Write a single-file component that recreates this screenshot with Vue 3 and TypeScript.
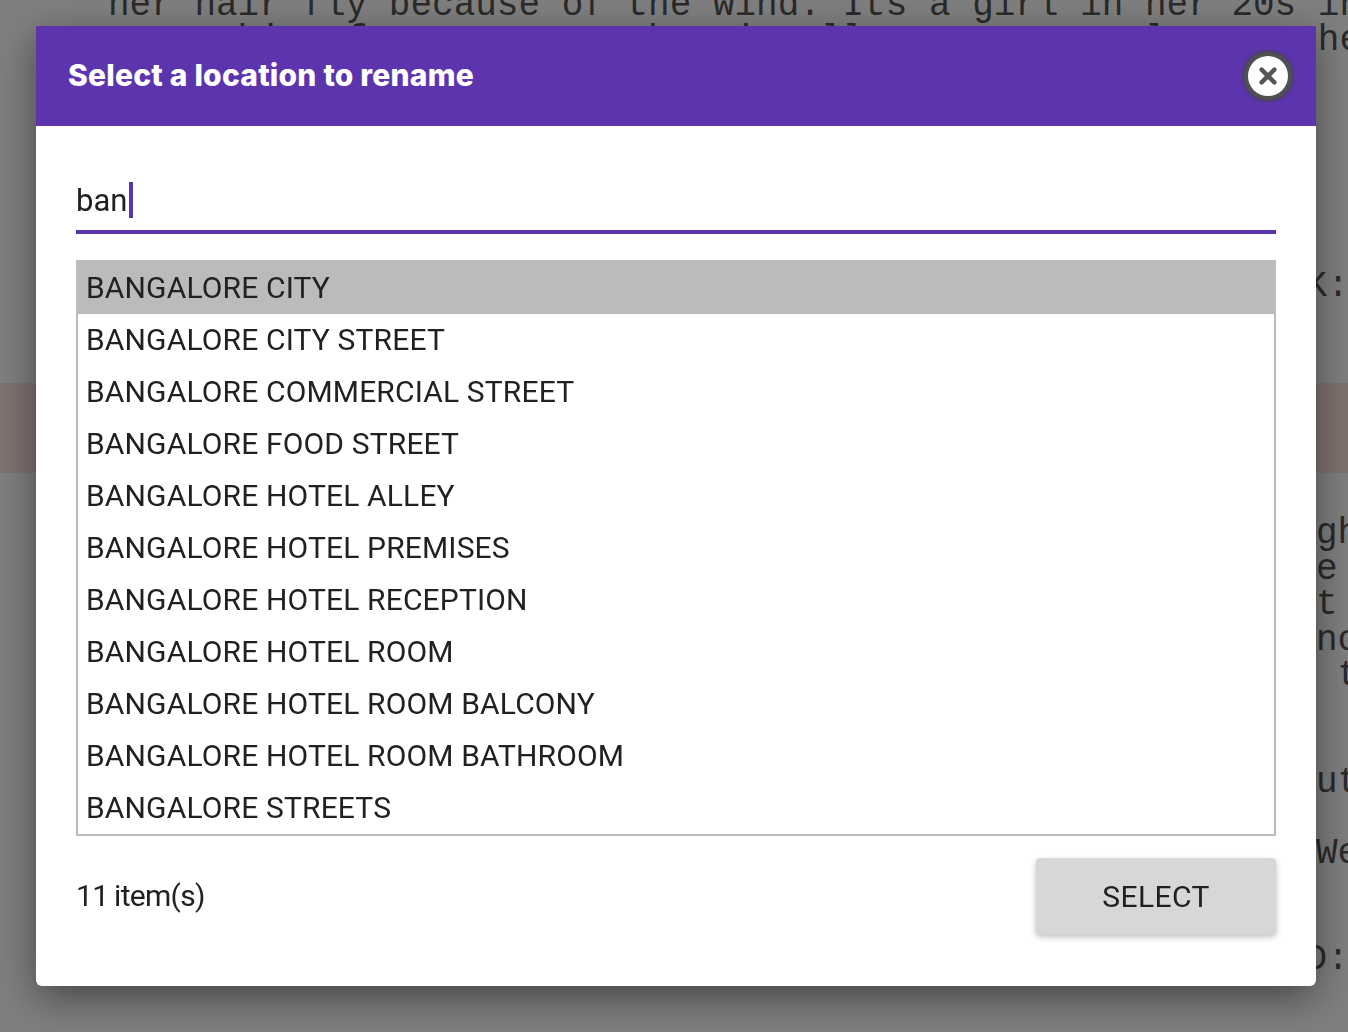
<template>
  <div class="page">
    <div class="script">
      <div v-for="(l, i) in sceneTop" :key="i" class="line" :style="{ paddingLeft: l.x + 'px' }">{{ l.text }}</div>
      <div class="scene-gap"></div>
      <div class="line" :style="{ paddingLeft: charX + 'px' }">K:</div>
      <div class="band"></div>
      <div class="scene-lower">
        <div v-for="(l, i) in sceneLower" :key="i" class="line" :style="{ paddingLeft: l.x + 'px' }">{{ l.text }}</div>
      </div>
    </div>

    <div class="overlay">
      <div class="dialog">
        <header class="dialog-head">
          <h1 class="dialog-title">Select a location to rename</h1>
          <button class="close-btn" aria-label="Close">
            <svg width="18" height="18" viewBox="0 0 18 18">
              <path d="M2.6 2.6 L15.4 15.4 M15.4 2.6 L2.6 15.4" stroke="#555" stroke-width="4.4" stroke-linecap="round" fill="none" />
            </svg>
          </button>
        </header>

        <div class="dialog-body">
          <div class="search">
            <span class="search-text">{{ query }}</span><span class="caret"></span>
          </div>

          <ul class="list">
            <li
              v-for="(loc, i) in locations"
              :key="loc"
              class="list-item"
              :class="{ selected: i === selectedIndex }"
            >
              {{ loc }}
            </li>
          </ul>

          <div class="dialog-foot">
            <span class="count">{{ locations.length }} item(s)</span>
            <button class="select-btn">SELECT</button>
          </div>
        </div>
      </div>
    </div>
  </div>
</template>

<script setup lang="ts">
import { ref } from 'vue'

const query = ref('ban')
const selectedIndex = ref(0)

const locations = [
  'BANGALORE CITY',
  'BANGALORE CITY STREET',
  'BANGALORE COMMERCIAL STREET',
  'BANGALORE FOOD STREET',
  'BANGALORE HOTEL ALLEY',
  'BANGALORE HOTEL PREMISES',
  'BANGALORE HOTEL RECEPTION',
  'BANGALORE HOTEL ROOM',
  'BANGALORE HOTEL ROOM BALCONY',
  'BANGALORE HOTEL ROOM BATHROOM',
  'BANGALORE STREETS'
]

// screenplay behind the dialog, only the edges of it show
const bodyX = 108
const edgeX = 1316
const charX = 1305.6

const sceneTop = [
  { text: 'her hair fly because of the wind. Its a girl in her 20s in', x: bodyX },
  { text: 'waves his of as car roar by air all over some mole on a her', x: bodyX }
]

const sceneLower = [
  { text: 'gh', x: edgeX },
  { text: 'e', x: edgeX },
  { text: 't', x: edgeX },
  { text: 'no', x: edgeX },
  { text: ' t', x: edgeX },
  { text: '\u00a0', x: edgeX },
  { text: '\u00a0', x: edgeX },
  { text: 'ut', x: edgeX },
  { text: '\u00a0', x: edgeX },
  { text: 'We', x: edgeX },
  { text: '\u00a0', x: edgeX },
  { text: '\u00a0', x: edgeX },
  { text: 'D:', x: charX }
]
</script>

<style>
html,
body {
  margin: 0;
  background: #fff;
}
</style>

<style scoped>
.page {
  height: 1032px;
  overflow: hidden;
}

.script {
  margin-top: -12px;
  font-family: "Liberation Mono", monospace;
  font-size: 36px;
  line-height: 35px;
  color: #555;
}

.line {
  height: 35px;
  white-space: pre;
}

.scene-gap {
  height: 211px;
}

.band {
  height: 90px;
  margin-top: 79px;
  background: #ffe6e0;
}

.scene-lower {
  margin-top: 43px;
}

.scene-lower .line {
  height: 35.5px;
  line-height: 35.5px;
}

.overlay {
  position: fixed;
  inset: 0;
  background: rgba(0, 0, 0, 0.5);
  display: flex;
  justify-content: center;
  align-items: flex-start;
  padding: 26px 0 0 4px;
}

.dialog {
  width: 1280px;
  height: 960px;
  background: #fff;
  border-radius: 0 0 6px 6px;
  box-shadow: 0 12px 40px rgba(0, 0, 0, 0.45);
  font-family: Roboto, "Open Sans", sans-serif;
  color: #212121;
}

.dialog-head {
  height: 100px;
  box-sizing: border-box;
  padding: 0 28px 0 32px;
  background: #5c35ae;
  display: flex;
  align-items: center;
  justify-content: space-between;
}

.dialog-title {
  margin: 0 0 2px;
  font-family: Inter, Roboto, sans-serif;
  font-size: 30px;
  font-weight: 800;
  letter-spacing: 0.22px;
  color: #fff;
}

.close-btn {
  width: 40px;
  height: 40px;
  padding: 0;
  border: none;
  border-radius: 50%;
  background: #fff;
  box-shadow: 0 0 0 4px #505050, 0 0 3px 6px rgba(70, 70, 70, 0.7);
  display: flex;
  align-items: center;
  justify-content: center;
}

.dialog-body {
  padding: 0 40px;
}

.search {
  height: 108px;
  box-sizing: border-box;
  padding: 56px 0 12px 0;
  border-bottom: 4px solid #5c35ae;
  display: flex;
  align-items: center;
  font-size: 31px;
}

.caret {
  width: 4px;
  height: 36px;
  margin-left: 2px;
  background: #5c35ae;
}

.list {
  list-style: none;
  margin: 26px 0 0;
  padding: 0;
  border: 2px solid #bbb;
}

.list-item {
  height: 52px;
  line-height: 52px;
  padding-left: 8px;
  font-size: 30px;
  letter-spacing: 0.15px;
  white-space: nowrap;
}

.list-item.selected {
  background: #bbb;
}

.dialog-foot {
  margin-top: 22px;
  display: flex;
  align-items: center;
  justify-content: space-between;
}

.count {
  padding-bottom: 2px;
  font-size: 30px;
  letter-spacing: -0.7px;
  word-spacing: -1px;
}

.select-btn {
  width: 240px;
  height: 76px;
  border: none;
  border-radius: 4px;
  background: #d6d7d7;
  box-shadow: 0 3px 6px rgba(0, 0, 0, 0.25);
  font-family: inherit;
  font-size: 30px;
  letter-spacing: 0.4px;
  color: #212121;
}
</style>
